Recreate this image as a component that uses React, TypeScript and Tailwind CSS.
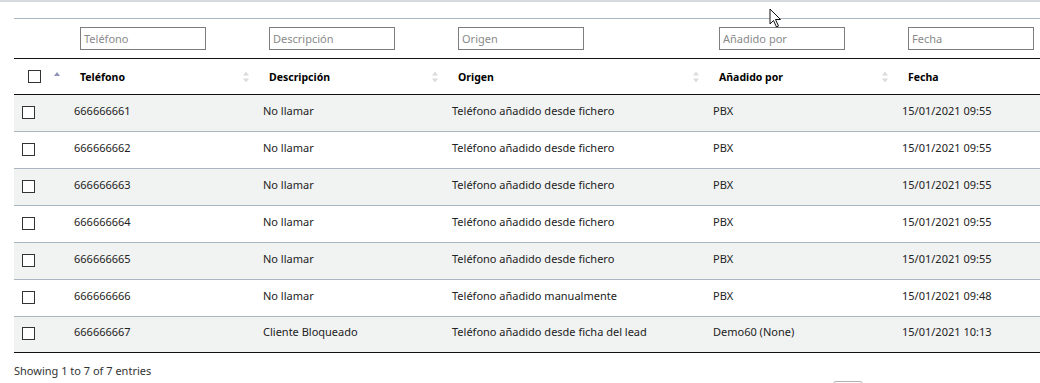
import React from 'react';

type Row = {
  phone: string;
  desc: string;
  origin: string;
  addedBy: string;
  date: string;
};

const rows: Row[] = [
  { phone: '666666661', desc: 'No llamar', origin: 'Teléfono añadido desde fichero', addedBy: 'PBX', date: '15/01/2021 09:55' },
  { phone: '666666662', desc: 'No llamar', origin: 'Teléfono añadido desde fichero', addedBy: 'PBX', date: '15/01/2021 09:55' },
  { phone: '666666663', desc: 'No llamar', origin: 'Teléfono añadido desde fichero', addedBy: 'PBX', date: '15/01/2021 09:55' },
  { phone: '666666664', desc: 'No llamar', origin: 'Teléfono añadido desde fichero', addedBy: 'PBX', date: '15/01/2021 09:55' },
  { phone: '666666665', desc: 'No llamar', origin: 'Teléfono añadido desde fichero', addedBy: 'PBX', date: '15/01/2021 09:55' },
  { phone: '666666666', desc: 'No llamar', origin: 'Teléfono añadido manualmente', addedBy: 'PBX', date: '15/01/2021 09:48' },
  { phone: '666666667', desc: 'Cliente Bloqueado', origin: 'Teléfono añadido desde ficha del lead', addedBy: 'Demo60 (None)', date: '15/01/2021 10:13' },
];

const columns = [
  { label: 'Teléfono', width: 'w-[189px]' },
  { label: 'Descripción', width: 'w-[189px]' },
  { label: 'Origen', width: 'w-[261px]' },
  { label: 'Añadido por', width: 'w-[189px]' },
  { label: 'Fecha', width: 'w-[189px]' },
];

// double arrow shown on sortable headers
const SortBoth = () => (
  <svg width="6" height="11" viewBox="0 0 6 11" className="absolute right-[4px] top-1/2 -translate-y-1/2">
    <path d="M3 0 L6 4 L0 4 Z" fill="#dcdcdc" />
    <path d="M3 11 L6 7 L0 7 Z" fill="#dcdcdc" />
  </svg>
);

const SortAsc = () => (
  <svg width="6" height="4" viewBox="0 0 6 4" className="absolute right-[4px] top-[13px]">
    <path d="M3 0 L6 4 L0 4 Z" fill="#8f93b6" />
  </svg>
);

const Box = () => <span className="block w-[13px] h-[13px] border border-[#333] bg-white" />;

export default function App() {
  return (
    <div className="relative w-[1040px] h-[383px] overflow-hidden bg-white font-['Segoe_UI','Noto_Sans',sans-serif] text-[#222] border-t-2 border-[#d6dade]">
      <div className="pl-[14px] pt-[16px]">
        <table className="w-[1067px] table-fixed border-collapse text-[11px]">
          <colgroup>
            <col className="w-[50px]" />
            {columns.map((c) => (
              <col key={c.label} className={c.width} />
            ))}
          </colgroup>
          <thead>
            <tr className="h-[40px] border-t border-[#a9b5c1]">
              <td />
              {columns.map((c) => (
                <td key={c.label} className="pl-[16px] align-middle">
                  <input
                    placeholder={c.label}
                    className="block w-[126px] h-[23px] border border-[#7d7d7d] px-[3px] text-[11px] placeholder:text-[#8a8a8a] outline-none"
                  />
                </td>
              ))}
            </tr>
            <tr className="h-[36px] border-t border-b border-[#111]">
              <th className="relative pl-[14px] text-left">
                <Box />
                <SortAsc />
              </th>
              {columns.map((c) => (
                <th key={c.label} className="relative pl-[16px] pt-[2px] text-left font-bold text-[10.5px] text-black">
                  {c.label}
                  {c.label !== 'Fecha' && <SortBoth />}
                </th>
              ))}
            </tr>
          </thead>
          <tbody>
            {rows.map((r, i) => (
              <tr
                key={r.phone}
                className={`${i === rows.length - 1 ? 'h-[36px] border-b border-[#111]' : 'h-[37px] border-b border-[#a9b5c1]'} ${
                  i % 2 === 0 ? 'bg-[#f1f2f2]' : 'bg-white'
                }`}
              >
                <td className="pl-[8px] pb-[2px]">
                  <Box />
                </td>
                <td className="pl-[10px] pb-[4px]">{r.phone}</td>
                <td className="pl-[10px] pb-[4px]">{r.desc}</td>
                <td className="pl-[10px] pb-[4px]">{r.origin}</td>
                <td className="pl-[10px] pb-[4px]">{r.addedBy}</td>
                <td className="pl-[10px] pb-[4px]">{r.date}</td>
              </tr>
            ))}
          </tbody>
        </table>
        <div className="pt-[10px] text-[11px] text-[#333]">Showing 1 to 7 of 7 entries</div>
        <div className="ml-[819px] mt-[1px] w-[30px] h-[20px] rounded-t-[3px] border border-[#b0b0b0]" />
      </div>

      {/* mouse pointer captured in the screenshot */}
      <svg width="14" height="21" viewBox="0 0 14 21" className="absolute left-[769px] top-[6px]">
        <path d="M1 1 L1 16 L4.5 12.5 L7.5 19 L9.5 18 L6.5 11.5 L11.5 11.5 Z" fill="white" stroke="#111" strokeWidth="1" strokeLinejoin="round" />
      </svg>
    </div>
  );
}
